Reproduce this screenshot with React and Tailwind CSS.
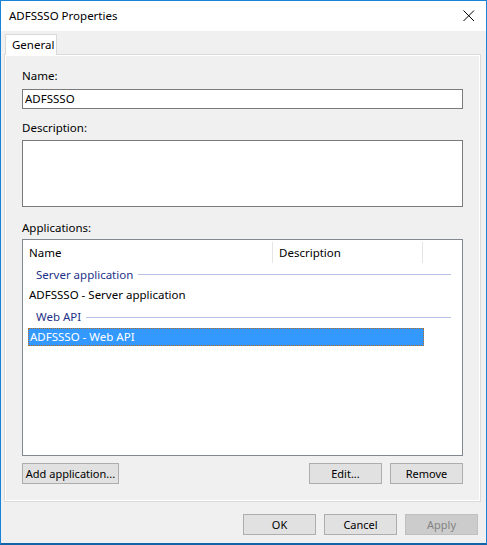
import React from "react";

const font = { fontFamily: '"Noto Sans", "Segoe UI", sans-serif' };

function Btn({ children, w = "w-[73px]", disabled = false }) {
  return (
    <div
      className={`${w} h-[21px] flex items-center justify-center border text-[11px] leading-none whitespace-nowrap ${
        disabled
          ? "bg-[#cccccc] border-[#bfbfbf] text-[#838383]"
          : "bg-[#e1e1e1] border-[#adadad] text-black"
      }`}
    >
      {children}
    </div>
  );
}

function Group({ label, h }) {
  return (
    <div className={`${h} flex items-center pl-[13px] pr-[11px]`}>
      <span className="text-[#1e3287] text-[11.5px] leading-none">{label}</span>
      <div className="flex-1 ml-[5px] h-px bg-[#b6c1e4]" />
    </div>
  );
}

export default function App() {
  return (
    <div
      className="w-[487px] h-[545px] flex flex-col bg-[#f0f0f0] border border-[#1883d7] border-b-2 border-b-[#1363a8] text-black overflow-hidden"
      style={font}
    >
      {/* title bar */}
      <div className="h-[30px] bg-white flex items-center justify-between pl-[8px] pr-[10px] shrink-0">
        <span className="text-[11.5px] leading-none">ADFSSSO Properties</span>
        <svg width="12" height="12" viewBox="0 0 12 12" className="mr-[1px]">
          <path d="M0.5 0.5 L11 11 M11 0.5 L0.5 11" stroke="#000" strokeWidth="1" fill="none" />
        </svg>
      </div>

      {/* tabs */}
      <div className="pt-[3px] pl-[4px] shrink-0 flex relative z-10">
        <div className="h-[21px] w-[52px] bg-white border border-[#d9d9d9] border-b-0 flex items-center pl-[6px] text-[11.5px] leading-none">
          General
        </div>
      </div>

      {/* panel */}
      <div className="ml-[3px] mr-[5px] -mt-px border border-[#dadada] shrink-0">
        <div className="border border-white flex flex-col px-[16px] pb-[16px]">
          <div className="mt-[12px] h-[16px] flex items-center text-[11.5px] leading-none">Name:</div>
          <div className="mt-[5px] h-[20px] bg-white border border-[#7a7a7a] flex items-center pl-[2px] text-[11.5px] leading-none">
            ADFSSSO
          </div>
          <div className="mt-[11px] h-[16px] flex items-center text-[11.5px] leading-none">Description:</div>
          <div className="mt-[4px] h-[67px] bg-white border border-[#7a7a7a]" />
          <div className="mt-[13px] h-[16px] flex items-center text-[11.5px] leading-none">Applications:</div>
          <div className="mt-[3px] h-[217px] bg-white border border-[#828790] flex flex-col">
            {/* header */}
            <div className="h-[25px] flex text-[11.5px] leading-none">
              <div className="w-[250px] flex items-center pl-[6px] border-r border-[#e5e5e5] my-[2px]">Name</div>
              <div className="w-[150px] flex items-center pl-[6px] border-r border-[#e5e5e5] my-[2px]">Description</div>
            </div>
            <Group label="Server application" h="h-[19px]" />
            <div className="h-[22px] flex items-center pl-[6px] text-[11.5px] leading-none">
              ADFSSSO - Server application
            </div>
            <Group label="Web API" h="h-[22px]" />
            <div className="ml-[5px] w-[396px] h-[18px] bg-[#3399ff] border border-dotted border-[#b3691f] flex items-center pl-[1px] text-white text-[11.5px] leading-none">
              ADFSSSO - Web API
            </div>
          </div>
          <div className="mt-[7px] flex items-center">
            <Btn w="w-[97px]">Add application...</Btn>
            <div className="flex-1" />
            <Btn>Edit...</Btn>
            <div className="w-[8px]" />
            <Btn>Remove</Btn>
          </div>
        </div>
      </div>

      {/* bottom buttons */}
      <div className="mt-[12px] flex justify-end gap-[8px] pr-[8px]">
        <Btn>OK</Btn>
        <Btn>Cancel</Btn>
        <Btn disabled>Apply</Btn>
      </div>
    </div>
  );
}
